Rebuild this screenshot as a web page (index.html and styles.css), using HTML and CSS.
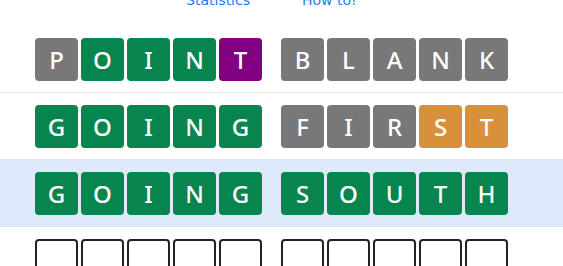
FILE: index.html
```html
<!DOCTYPE html>
<html lang="en">

<head>
    <meta charset="UTF-8">
    <meta name="viewport" content="width=device-width, initial-scale=1.0">
    <title>Phrase game</title>
    <link rel="stylesheet" href="styles.css">
</head>

<body>
    <div class="nav">
        <a href="javascript:;" class="nav_link">Statistics</a>
        <a href="javascript:;" class="nav_link">How to!</a>
    </div>

    <div class="board">
        <!-- 第一行 -->
        <div class="row">
            <div class="word">
                <span class="tile grey">P</span>
                <span class="tile green">O</span>
                <span class="tile green">I</span>
                <span class="tile green">N</span>
                <span class="tile purple">T</span>
            </div>
            <div class="word">
                <span class="tile grey">B</span>
                <span class="tile grey">L</span>
                <span class="tile grey">A</span>
                <span class="tile grey">N</span>
                <span class="tile grey">K</span>
            </div>
        </div>
        <!-- 第二行 -->
        <div class="row">
            <div class="word">
                <span class="tile green">G</span>
                <span class="tile green">O</span>
                <span class="tile green">I</span>
                <span class="tile green">N</span>
                <span class="tile green">G</span>
            </div>
            <div class="word">
                <span class="tile grey">F</span>
                <span class="tile grey">I</span>
                <span class="tile grey">R</span>
                <span class="tile orange">S</span>
                <span class="tile orange">T</span>
            </div>
        </div>
        <!-- 当前行 -->
        <div class="row active">
            <div class="word">
                <span class="tile green">G</span>
                <span class="tile green">O</span>
                <span class="tile green">I</span>
                <span class="tile green">N</span>
                <span class="tile green">G</span>
            </div>
            <div class="word">
                <span class="tile green">S</span>
                <span class="tile green">O</span>
                <span class="tile green">U</span>
                <span class="tile green">T</span>
                <span class="tile green">H</span>
            </div>
        </div>
        <!-- 空行 -->
        <div class="row">
            <div class="word">
                <span class="tile empty"></span>
                <span class="tile empty"></span>
                <span class="tile empty"></span>
                <span class="tile empty"></span>
                <span class="tile empty"></span>
            </div>
            <div class="word">
                <span class="tile empty"></span>
                <span class="tile empty"></span>
                <span class="tile empty"></span>
                <span class="tile empty"></span>
                <span class="tile empty"></span>
            </div>
        </div>
    </div>
</body>

</html>
```

FILE: styles.css
```css
* {
    margin: 0px;
    padding: 0px;
    box-sizing: border-box;
}

body {
    background-color: #fff;
    font-family: "DejaVu Sans", Verdana, sans-serif;
    overflow: hidden;
}
/*
 * 顶部链接
 */

.nav {
    height: 26px;
    display: flex;
    align-items: flex-start;
    padding-left: 186px;
    gap: 52px;
}

.nav_link {
    margin-top: -8px;
    color: #1a7cf5;
    text-decoration: none;
    font-size: 14px;
    line-height: 16px;
}
/*
 * 每一行
 */

.row {
    display: flex;
    gap: 19px;
    padding: 12px 0 11px 35px;
    border-bottom: 1px solid #dee2e6;
}

.row.active {
    background-color: #dee9fc;
}

.word {
    display: flex;
    gap: 3px;
}
/*
 * 格子
 */

.tile {
    width: 43px;
    height: 43px;
    border-radius: 4px;
    display: flex;
    align-items: center;
    justify-content: center;
    color: #fff;
    font-family: "Noto Sans", sans-serif;
    font-size: 24px;
    font-weight: 500;
}

.grey {
    background-color: #787878;
}

.green {
    background-color: #06854f;
}

.purple {
    background-color: #800080;
}

.orange {
    background-color: #d8913a;
}

.empty {
    border: 2px solid #222;
}
```
